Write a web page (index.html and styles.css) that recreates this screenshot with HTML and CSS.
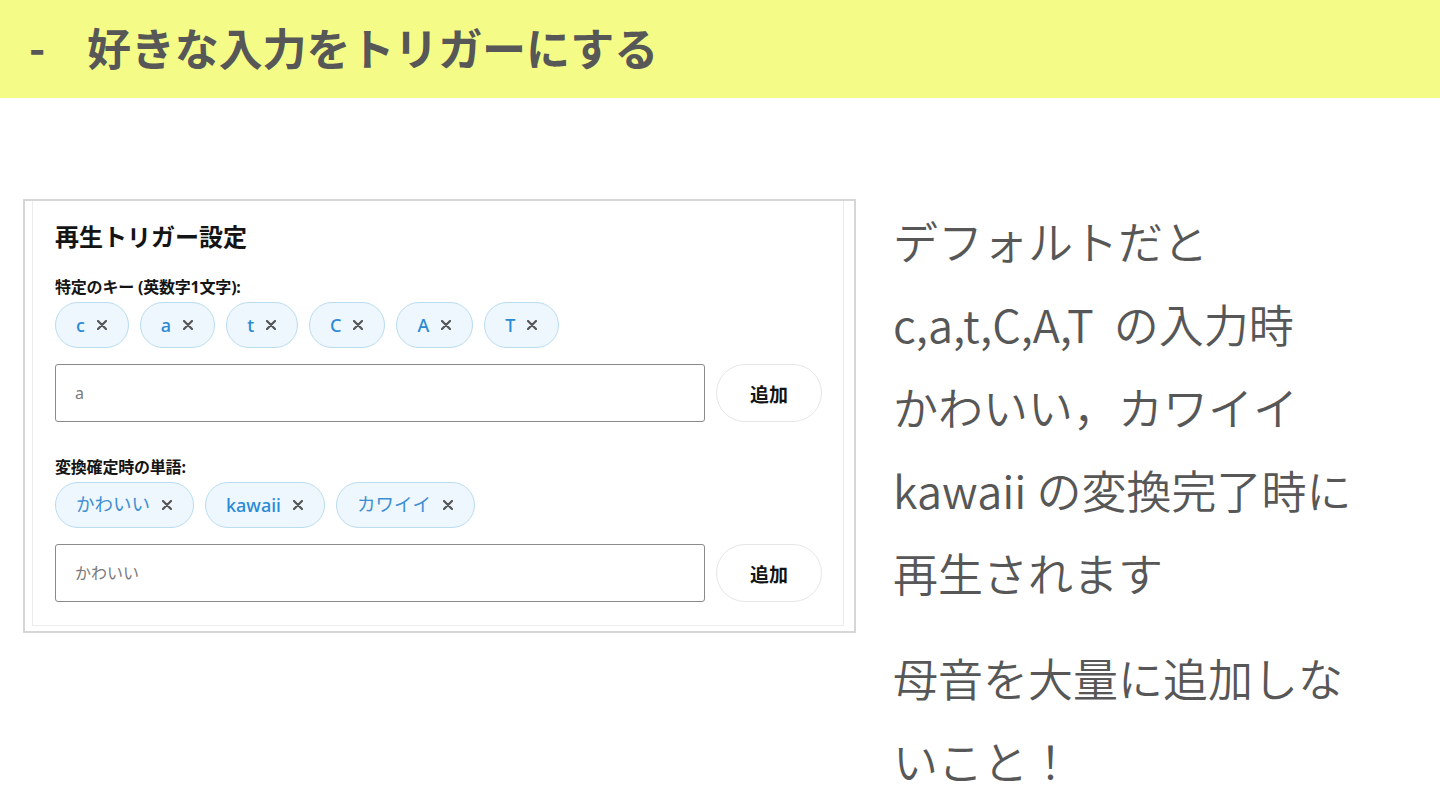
FILE: index.html
```html
<!DOCTYPE html>
<html lang="ja">
<head>
<meta charset="utf-8">
<title>好きな入力をトリガーにする</title>
<link rel="stylesheet" href="styles.css">
</head>
<body>
<header class="titlebar">
  <span class="dash">-</span><h1 class="title">好きな入力をトリガーにする</h1>
</header>
<main class="content">
  <div class="shot">
    <section class="card">
      <h2 class="card-title">再生トリガー設定</h2>
      <div class="label">特定のキー (英数字1文字):</div>
      <div class="chips">
        <span class="chip"><span class="chip-text">c</span><svg class="x" viewBox="0 0 10 10"><path d="M1 1L9 9M9 1L1 9"/></svg></span>
        <span class="chip"><span class="chip-text">a</span><svg class="x" viewBox="0 0 10 10"><path d="M1 1L9 9M9 1L1 9"/></svg></span>
        <span class="chip"><span class="chip-text">t</span><svg class="x" viewBox="0 0 10 10"><path d="M1 1L9 9M9 1L1 9"/></svg></span>
        <span class="chip"><span class="chip-text">C</span><svg class="x" viewBox="0 0 10 10"><path d="M1 1L9 9M9 1L1 9"/></svg></span>
        <span class="chip"><span class="chip-text">A</span><svg class="x" viewBox="0 0 10 10"><path d="M1 1L9 9M9 1L1 9"/></svg></span>
        <span class="chip"><span class="chip-text">T</span><svg class="x" viewBox="0 0 10 10"><path d="M1 1L9 9M9 1L1 9"/></svg></span>
      </div>
      <div class="add-row">
        <input class="field" type="text" placeholder="a">
        <button class="add-btn" type="button">追加</button>
      </div>
      <div class="label label-second">変換確定時の単語:</div>
      <div class="chips">
        <span class="chip"><span class="chip-text jp">かわいい</span><svg class="x" viewBox="0 0 10 10"><path d="M1 1L9 9M9 1L1 9"/></svg></span>
        <span class="chip"><span class="chip-text">kawaii</span><svg class="x" viewBox="0 0 10 10"><path d="M1 1L9 9M9 1L1 9"/></svg></span>
        <span class="chip"><span class="chip-text jp">カワイイ</span><svg class="x" viewBox="0 0 10 10"><path d="M1 1L9 9M9 1L1 9"/></svg></span>
      </div>
      <div class="add-row">
        <input class="field" type="text" placeholder="かわいい">
        <button class="add-btn" type="button">追加</button>
      </div>
    </section>
  </div>
  <div class="notes">
    <p class="note">デフォルトだと<br>c,a,t,C,A,T&nbsp; の入力時<br>かわいい，カワイイ<br>kawaii の変換完了時に<br>再生されます</p>
    <p class="note note-warn">母音を大量に追加しな<br>いこと！</p>
  </div>
</main>
</body>
</html>
```
FILE: styles.css
```css
html, body {
  margin: 0;
  padding: 0;
  background: #ffffff;
}

body {
  width: 1440px;
  height: 810px;
  overflow: hidden;
  font-family: "Noto Sans", "Noto Sans CJK JP", sans-serif;
}

.titlebar {
  height: 98px;
  background: #f4fc87;
  display: flex;
  align-items: center;
  padding-left: 29px;
  box-sizing: border-box;
  color: #575757;
  font-family: "Noto Sans CJK JP", sans-serif;
  font-weight: 700;
  font-size: 44px;
}

.dash {
  width: 58px;
  line-height: 1;
  margin-top: -6px;
}

.title {
  margin: 0;
  font-size: 44px;
  font-weight: 700;
  letter-spacing: -0.1px;
  line-height: 1;
  margin-top: -4px;
}

.content {
  display: flex;
  align-items: flex-start;
  padding: 101px 0 0 23px;
  gap: 37px;
}

.shot {
  width: 833px;
  box-sizing: border-box;
  border: 2px solid #d6d6d6;
  padding: 0 10px 5px 7px;
  background: #fff;
}

.card {
  border: 1px solid #ececec;
  border-top: 0;
  padding: 19px 21px 23px 22px;
}

.card-title {
  margin: 0;
  font-family: "Noto Sans CJK JP", sans-serif;
  font-size: 24px;
  font-weight: 700;
  line-height: 32px;
  color: #141414;
}

.label {
  margin-top: 25px;
  font-family: "Noto Sans", "Noto Sans CJK JP", sans-serif;
  font-size: 16px;
  font-weight: 700;
  line-height: 20px;
  color: #141414;
  letter-spacing: -0.2px;
}

.label-second {
  margin-top: 35px;
}

.chips {
  display: flex;
  gap: 11px;
  margin-top: 5px;
}

.chip {
  height: 46px;
  box-sizing: border-box;
  display: inline-flex;
  align-items: center;
  gap: 12px;
  padding: 0 21px 0 20px;
  border: 1px solid #b9dcf0;
  border-radius: 23px;
  background: #eef7fd;
}

.chip-text {
  font-family: "Noto Sans", "Noto Sans CJK JP", sans-serif;
  font-size: 18px;
  font-weight: 500;
  color: #2b8ad6;
  line-height: 1;
}

.chip-text.jp {
  font-family: "Noto Sans CJK JP", sans-serif;
  font-size: 18.5px;
  font-weight: 400;
  color: #3e8fd3;
  margin-top: -3px;
}

.x {
  width: 10px;
  height: 10px;
  fill: none;
  stroke: #555;
  stroke-width: 2.2;
  stroke-linecap: round;
}

.add-row {
  display: flex;
  gap: 11px;
  margin-top: 16px;
}

.field {
  flex: 1;
  height: 58px;
  box-sizing: border-box;
  border: 1px solid #8a8a8a;
  border-radius: 3px;
  padding: 0 19px;
  font-family: "Noto Sans", "Noto Sans CJK JP", sans-serif;
  font-size: 16px;
  color: #333;
  background: #fff;
  outline: none;
}

.field::placeholder {
  color: #7a7a7a;
}

.add-btn {
  width: 106px;
  height: 58px;
  box-sizing: border-box;
  border: 1px solid #e6e6e6;
  border-radius: 29px;
  background: #fff;
  font-family: "Noto Sans CJK JP", sans-serif;
  font-size: 19px;
  font-weight: 700;
  color: #141414;
  padding: 0;
}

.notes {
  width: 500px;
}

.note {
  margin: 0;
  font-family: "Noto Sans CJK JP", sans-serif;
  font-weight: 350;
  font-size: 45px;
  line-height: 83px;
  color: #575757;
  white-space: nowrap;
}

.note-warn {
  margin-top: 22px;
}
```
